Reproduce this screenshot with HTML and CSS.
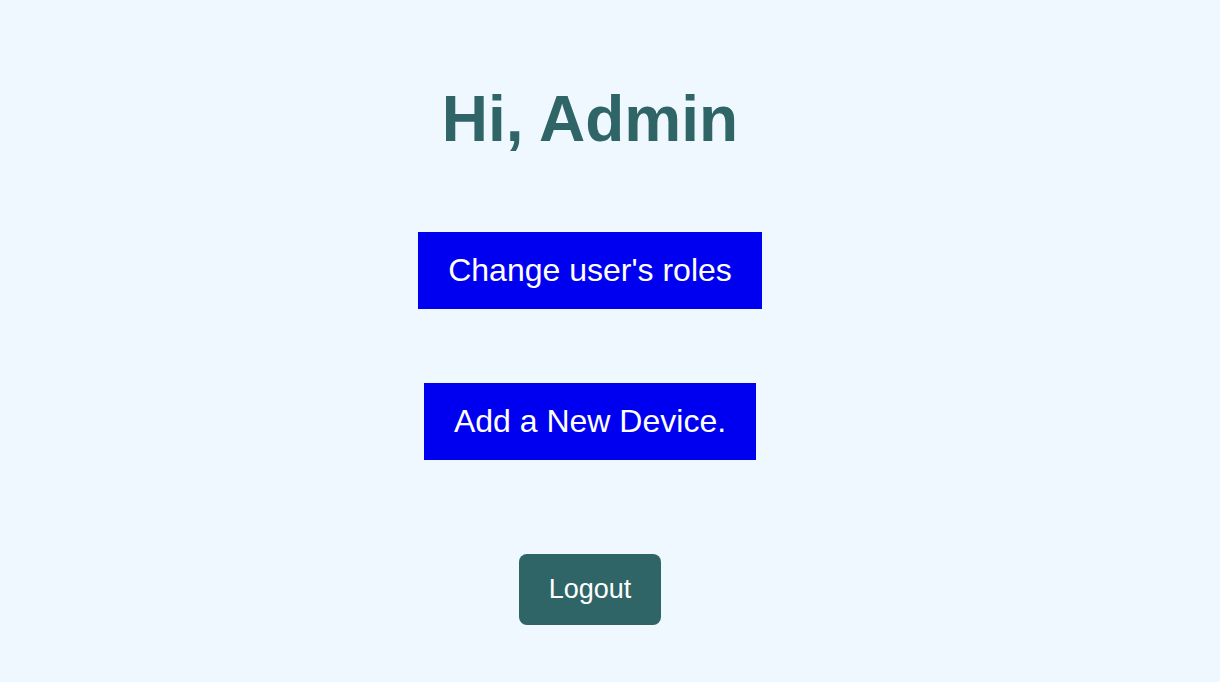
FILE: index.html
```html
<!DOCTYPE html>
<html>
<head>
<meta charset="utf-8">
<link rel="stylesheet" href="styles.css">
</head>
<body>
<main class="page">
  <h1 class="greeting">Hi, Admin</h1>
  <a class="action" href="#">Change user's roles</a>
  <a class="action action-second" href="#">Add a New Device.</a>
  <button class="logout" type="button">Logout</button>
</main>
</body>
</html>
```

FILE: styles.css
```css
html, body {
  margin: 0;
  padding: 0;
  background: #f0f8ff;
  height: 100%;
}

body {
  font-family: "Liberation Sans", Arial, sans-serif;
}

.page {
  width: 1180px;
  display: flex;
  flex-direction: column;
  align-items: center;
  padding-top: 82px;
}

.greeting {
  margin: 0;
  font-size: 64px;
  font-weight: bold;
  color: #2f6567;
  line-height: 74px;
}

.action {
  display: block;
  margin-top: 76px;
  padding: 20px 30px;
  background: #0000f0;
  color: #ffffff;
  font-size: 32px;
  line-height: 37px;
  text-decoration: none;
}

.action-second {
  margin-top: 74px;
}

.logout {
  margin-top: 94px;
  padding: 20px 30px;
  border: none;
  border-radius: 8px;
  background: #2f6567;
  color: #ffffff;
  font-family: "Liberation Sans", Arial, sans-serif;
  font-size: 27px;
  line-height: 31px;
}
```
